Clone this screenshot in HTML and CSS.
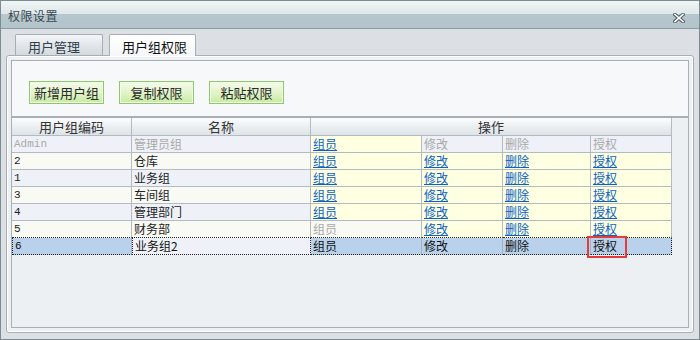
FILE: index.html
```html
<!DOCTYPE html>
<html lang="zh-CN">
<head>
  <meta charset="UTF-8">
  <title>权限设置</title>
  <link rel="stylesheet" href="styles.css">
</head>
<body>
  <div class="window">
    <div class="titlebar">
      <span class="title">权限设置</span>
      <svg class="close" width="12" height="10" viewBox="0 0 12 10">
        <path d="M2 1.5 L10 8.5 M10 1.5 L2 8.5" stroke="#4d5c62" stroke-width="3.6" stroke-linecap="square"/>
        <path d="M2 1.5 L10 8.5 M10 1.5 L2 8.5" stroke="#fff" stroke-width="1.6" stroke-linecap="square"/>
      </svg>
    </div>
    <div class="main">
      <div class="tabs">
        <div class="tab">用户管理</div>
        <div class="tab active">用户组权限</div>
      </div>
      <div class="panel">
        <div class="box">
          <div class="toolbar">
            <button class="btn">新增用户组</button>
            <button class="btn">复制权限</button>
            <button class="btn">粘贴权限</button>
          </div>
          <div class="grid">
            <table>
              <colgroup>
                <col class="w1"><col class="w2"><col class="w3"><col class="w4"><col class="w5"><col class="w6">
              </colgroup>
              <thead>
                <tr><th>用户组编码</th><th>名称</th><th colspan="4">操作</th></tr>
              </thead>
              <tbody>
                <tr class="odd">
                  <td class="code off">Admin</td><td class="off">管理员组</td>
                  <td class="op"><a href="#">组员</a></td><td class="off">修改</td><td class="off">删除</td><td class="off">授权</td>
                </tr>
                <tr class="even">
                  <td class="code">2</td><td>仓库</td>
                  <td class="op"><a href="#">组员</a></td><td class="op"><a href="#">修改</a></td><td class="op"><a href="#">删除</a></td><td class="op"><a href="#">授权</a></td>
                </tr>
                <tr class="odd">
                  <td class="code">1</td><td>业务组</td>
                  <td class="op"><a href="#">组员</a></td><td class="op"><a href="#">修改</a></td><td class="op"><a href="#">删除</a></td><td class="op"><a href="#">授权</a></td>
                </tr>
                <tr class="even">
                  <td class="code">3</td><td>车间组</td>
                  <td class="op"><a href="#">组员</a></td><td class="op"><a href="#">修改</a></td><td class="op"><a href="#">删除</a></td><td class="op"><a href="#">授权</a></td>
                </tr>
                <tr class="odd">
                  <td class="code">4</td><td>管理部门</td>
                  <td class="op"><a href="#">组员</a></td><td class="op"><a href="#">修改</a></td><td class="op"><a href="#">删除</a></td><td class="op"><a href="#">授权</a></td>
                </tr>
                <tr class="even pre-sel">
                  <td class="code">5</td><td>财务部</td>
                  <td class="off">组员</td><td class="op"><a href="#">修改</a></td><td class="op"><a href="#">删除</a></td><td class="op"><a href="#">授权</a></td>
                </tr>
                <tr class="sel">
                  <td class="code">6</td><td class="focus">业务组2</td>
                  <td>组员</td><td>修改</td><td>删除</td><td><span class="mark">授权</span></td>
                </tr>
              </tbody>
            </table>
          </div>
        </div>
      </div>
    </div>
  </div>
</body>
</html>
```

FILE: styles.css
```css
* { box-sizing: border-box; }
body {
  margin: 0;
  font-family: "Noto Sans CJK SC", "Liberation Sans", sans-serif;
  font-size: 12px;
  color: #222;
  background: #dcdfe3;
}
.window {
  width: 700px;
  height: 340px;
  border: 1px solid #7b8c93;
  display: flex;
  flex-direction: column;
  background: #dcdfe3;
}
.titlebar {
  height: 28px;
  flex: none;
  display: flex;
  align-items: center;
  justify-content: space-between;
  padding: 2px 14px 0 7px;
  border-bottom: 1px solid #8c9ca2;
  background: linear-gradient(#f1f5f6, #dde6e8 50%, #b5c7cc 50%, #b3c5ca);
}
.title {
  font-size: 12px;
  color: #3b4850;
  letter-spacing: 0.5px;
}
.close { display: block; margin-top: 4px; }
.main {
  flex: 1;
  padding: 5px 5px 0 5px;
}
.tabs {
  display: flex;
  gap: 6px;
  padding-left: 9px;
  height: 21px;
  position: relative;
  z-index: 1;
}
.tab {
  width: 88px;
  height: 21px;
  padding: 2px 0 0 12px;
  font-size: 13px;
  color: #2f3f4c;
  border: 1px solid #a5aeb3;
  border-bottom: none;
  border-radius: 2px 2px 0 0;
  background: linear-gradient(#f3f5f7, #d3d9dd);
}
.tab.active {
  width: 87px;
  height: 22px;
  color: #111;
  background: linear-gradient(#ffffff, #f5f7f9);
}
.panel {
  height: 278px;
  padding: 4px;
  border: 1px solid #a6afb4;
  border-radius: 3px;
  box-shadow: inset 0 0 0 1px #fff;
  background: #eef1f4;
}
.box {
  height: 100%;
  border: 1px solid #a7afb4;
  display: flex;
  flex-direction: column;
}
.toolbar {
  height: 55px;
  flex: none;
  display: flex;
  gap: 15px;
  padding: 20px 0 0 17px;
  background: #f7f8fa;
}
.btn {
  width: 75px;
  height: 23px;
  padding: 0;
  font-family: inherit;
  font-size: 13px;
  color: #2a2a2a;
  border: 1px solid #8dc86b;
  box-shadow: inset 0 0 0 1px #f4fbea;
  background: linear-gradient(#f5fbec, #dff3c6 55%, #c7eaa2);
}
.grid {
  flex: 1;
  border-top: 2px solid #a9afb4;
  background: #ecf0f3;
}
table {
  border-collapse: separate;
  border-spacing: 0;
  table-layout: fixed;
  width: 660px;
}
.w1 { width: 120px; }
.w2 { width: 179px; }
.w3 { width: 111px; }
.w4 { width: 81px; }
.w5 { width: 88px; }
.w6 { width: 81px; }
th, td {
  height: 17px;
  padding: 0 2px;
  line-height: 16px;
  font-weight: normal;
  text-align: left;
  white-space: nowrap;
  overflow: visible;
  border-right: 1px solid #b2bac2;
  border-bottom: 1px solid #b2bac2;
}
th {
  height: 18px;
  text-align: center;
  color: #333;
  font-size: 13px;
  background: linear-gradient(#fbfcfd, #dde3e7);
}
.odd td { background: #eef2f8; }
.even td { background: #fafaf5; }
td.op { background: #ffffe1 !important; }
td.off { color: #a9a9a9; }
.code {
  font-family: "Liberation Mono", monospace;
  font-size: 11px;
}
a {
  color: #0a5fc8;
  text-decoration: underline;
}
.pre-sel td { border-bottom: 1px dotted #222; }
.sel td {
  background: #b9d1ea;
  color: #111;
  border-bottom: 1px dotted #222;
  border-right-color: #9fb3c8;
}
.sel td:first-child { border-left: 1px dotted #222; }
.sel td:last-child { border-right: 1px dotted #222; }
.sel td.focus {
  background: #eef2f8;
  border: 1px dotted #222;
  border-top: none;
}
.mark {
  position: relative;
}
.mark::after {
  content: "";
  position: absolute;
  left: -6px;
  top: -1px;
  width: 36px;
  height: 18px;
  border: 2px solid #e63b3b;
}
```
